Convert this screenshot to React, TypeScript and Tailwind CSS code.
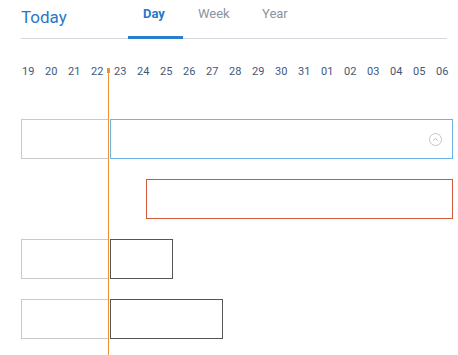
import React from "react";

const days = ["19","20","21","22","23","24","25","26","27","28","29","30","31","01","02","03","04","05","06"];

function Row({ left, children }: { left?: boolean; children?: React.ReactNode }) {
  return (
    <div className="flex h-[40px] items-stretch">
      {left ? (
        <div className="w-[88px] shrink-0 border border-[#c9c9c9]" />
      ) : (
        <div className="w-[88px] shrink-0" />
      )}
      <div className="w-[1px] shrink-0" />
      {children}
    </div>
  );
}

export default function App() {
  return (
    <div
      className="relative h-[355px] w-[458px] overflow-hidden bg-white"
      style={{ fontFamily: "Roboto, 'Noto Sans', sans-serif" }}
    >
      {/* Header */}
      <div className="ml-[21px] flex h-[39px] w-[426px] items-stretch border-b border-[#d3d7de]">
        <div className="w-[107px] shrink-0 pt-[5px] text-[17px] leading-[24px] text-[#2a78c6]">Today</div>
        <div className="relative w-[55px] shrink-0 pl-[15px] pt-[6px] text-[13px] font-bold leading-[16px] text-[#2a78c6]">
          Day
          <div className="absolute bottom-[-1px] left-0 h-[3px] w-full bg-[#2a7fca]" />
        </div>
        <div className="w-[64px] shrink-0 pl-[15px] pt-[6px] text-[13px] leading-[16px] text-[#8a93a0]">Week</div>
        <div className="w-[64px] shrink-0 pl-[15px] pt-[6px] text-[13px] leading-[16px] text-[#8a93a0]">Year</div>
      </div>

      {/* Day numbers */}
      <div className="ml-[21px] mt-[26px] flex">
        {days.map((d, i) => (
          <div key={i} className="w-[23px] shrink-0 pl-[1px] text-[11px] leading-[13px] text-[#3f5876]">
            {d}
          </div>
        ))}
      </div>

      {/* Rows */}
      <div className="ml-[21px] mt-[41px] flex flex-col gap-[20px]">
        <Row left>
          <div className="flex w-[343px] shrink-0 items-center justify-end border border-[#6ab4ea] pr-[10px]">
            <svg width="13" height="13" viewBox="0 0 13 13" fill="none">
              <circle cx="6.5" cy="6.5" r="6" stroke="#c4c4c4" strokeWidth="1" />
              <path d="M4.5 7.3 L6.5 5.5 L8.5 7.3" stroke="#b8b8b8" strokeWidth="1" strokeLinecap="round" strokeLinejoin="round" />
            </svg>
          </div>
        </Row>
        <Row>
          <div className="ml-[36px] w-[307px] shrink-0 border border-[#d25a3c]" />
        </Row>
        <Row left>
          <div className="w-[63px] shrink-0 border border-[#555555]" />
        </Row>
        <Row left>
          <div className="w-[113px] shrink-0 border border-[#555555]" />
        </Row>
      </div>

      {/* Current time line */}
      <div className="absolute bottom-0 left-[108px] top-[68px] w-[1px] bg-[#ec9234]" />
      <div className="absolute left-[107px] top-[68px] h-[5px] w-[3px] bg-[#ec9234]" />
    </div>
  );
}
